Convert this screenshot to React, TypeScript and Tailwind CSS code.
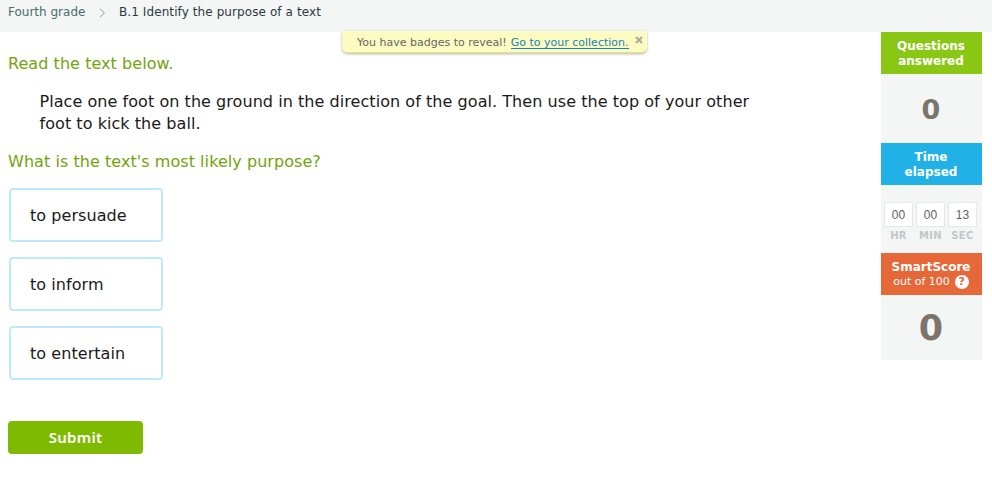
import { useState } from 'react'

const choices = ['to persuade', 'to inform', 'to entertain']

const timer = [
  { value: '00', label: 'HR' },
  { value: '00', label: 'MIN' },
  { value: '13', label: 'SEC' },
]

function Breadcrumb() {
  return (
    <nav className="flex h-8 shrink-0 items-start bg-[#f4f6f6] pl-2 text-[12px] leading-6">
      <a className="w-[77px] whitespace-nowrap text-[#4a6b6b]">Fourth grade</a>
      <svg className="mt-[8px] mr-[13px] ml-[14px]" width="7" height="10" viewBox="0 0 7 10" fill="none">
        <path d="M1 1l4.5 4L1 9" stroke="#999" />
      </svg>
      <span className="tracking-[0.09px] text-[#2b3940]">B.1 Identify the purpose of a text</span>
    </nav>
  )
}

function BadgeNotice({ onClose }: { onClose: () => void }) {
  return (
    <div className="absolute top-[31px] left-[342px] flex h-[22px] w-[305px] rounded-b-[5px] border-b border-[#e9e47e] bg-[#fcfcc2] pl-[15px] text-[11px] leading-[23px] text-[#666] shadow-[0_1px_3px_rgba(0,0,0,0.3)]">
      <span>You have badges to reveal!</span>
      <a className="ml-1 h-[18px] border-b border-[#1b82b5] text-[#1b82b5]">Go to your collection.</a>
      <button className="mt-[5px] ml-[6px] h-[8px]" onClick={onClose}>
        <svg width="8" height="8" viewBox="0 0 8 8">
          <path d="M1 1l6 6M7 1L1 7" stroke="#aaa99a" strokeWidth="2" />
        </svg>
      </button>
    </div>
  )
}

function Scoreboard() {
  return (
    <aside className="mr-[10px] h-[328px] w-[101px] shrink-0 bg-[#f4f6f6] pr-px text-center font-bold text-white">
      <h2 className="-mr-px h-[42px] bg-[#8ac714] pt-[7px] pr-px text-[12px] leading-[15px]">
        Questions
        <br />
        answered
      </h2>
      <div className="h-[69px] text-[27px] leading-[72px] text-[#7c746a]">0</div>

      <h2 className="-mr-px h-[42px] bg-[#20b2e7] pt-[7px] pr-px text-[12px] leading-[15px]">
        Time
        <br />
        elapsed
      </h2>
      <div className="flex h-[68px] justify-center gap-[3px] pt-[17px] pr-px">
        {timer.map((unit) => (
          <div key={unit.label} className="w-[29px]">
            <div className="h-[25px] border border-[#e7e9e9] bg-white font-['Liberation_Sans',sans-serif] text-[12px] leading-[24px] font-normal text-[#666259]">
              {unit.value}
            </div>
            <div className="text-[10px] leading-[17px] tracking-[0.3px] text-[#c5c6c6]">{unit.label}</div>
          </div>
        ))}
      </div>

      <h2 className="-mr-px h-[42px] bg-[#e66839] pt-[7px] pr-px text-[12px] leading-[15px]">
        SmartScore
        <span className="flex items-center justify-center gap-[5px] text-[11px] leading-[14px] font-normal">
          out of 100
          <span className="h-[14px] w-[14px] rounded-full bg-white text-[11px] leading-[14px] font-bold text-[#e66839]">?</span>
        </span>
      </h2>
      <div className="h-[65px] text-[35px] leading-[67px] text-[#7c746a]">0</div>
    </aside>
  )
}

export default function App() {
  const [showNotice, setShowNotice] = useState(true)

  return (
    <div className="relative flex h-[477px] flex-col overflow-hidden bg-white font-['DejaVu_Sans',sans-serif]">
      <Breadcrumb />
      {showNotice && <BadgeNotice onClose={() => setShowNotice(false)} />}

      <main className="flex items-start justify-between">
        <section className="w-[780px] pt-[21px] pl-2 text-[16px] leading-[22px] tracking-[0.055px] text-[#1a1a1a]">
          <h1 className="text-[#73a30e]">Read the text below.</h1>
          <p className="mt-4 ml-[31.5px]">
            Place one foot on the ground in the direction of the goal. Then use the top of your other
            <br />
            foot to kick the ball.
          </p>
          <h2 className="mt-4 text-[#73a30e]">What is the text's most likely purpose?</h2>

          <div className="mt-[15px] ml-px flex w-[154px] flex-col gap-[15px]">
            {choices.map((choice) => (
              <button
                key={choice}
                className="h-[54px] rounded-[4px] border-2 border-[#bfeafb] pt-[2px] pl-[19px] text-left"
              >
                {choice}
              </button>
            ))}
          </div>

          <button className="mt-[41px] h-[33px] w-[135px] rounded-[4px] bg-[#7ebb00] pb-[2px] font-['Noto_Sans',sans-serif] text-[15px] font-semibold tracking-[0.3px] text-white">
            Submit
          </button>
        </section>

        <Scoreboard />
      </main>
    </div>
  )
}
